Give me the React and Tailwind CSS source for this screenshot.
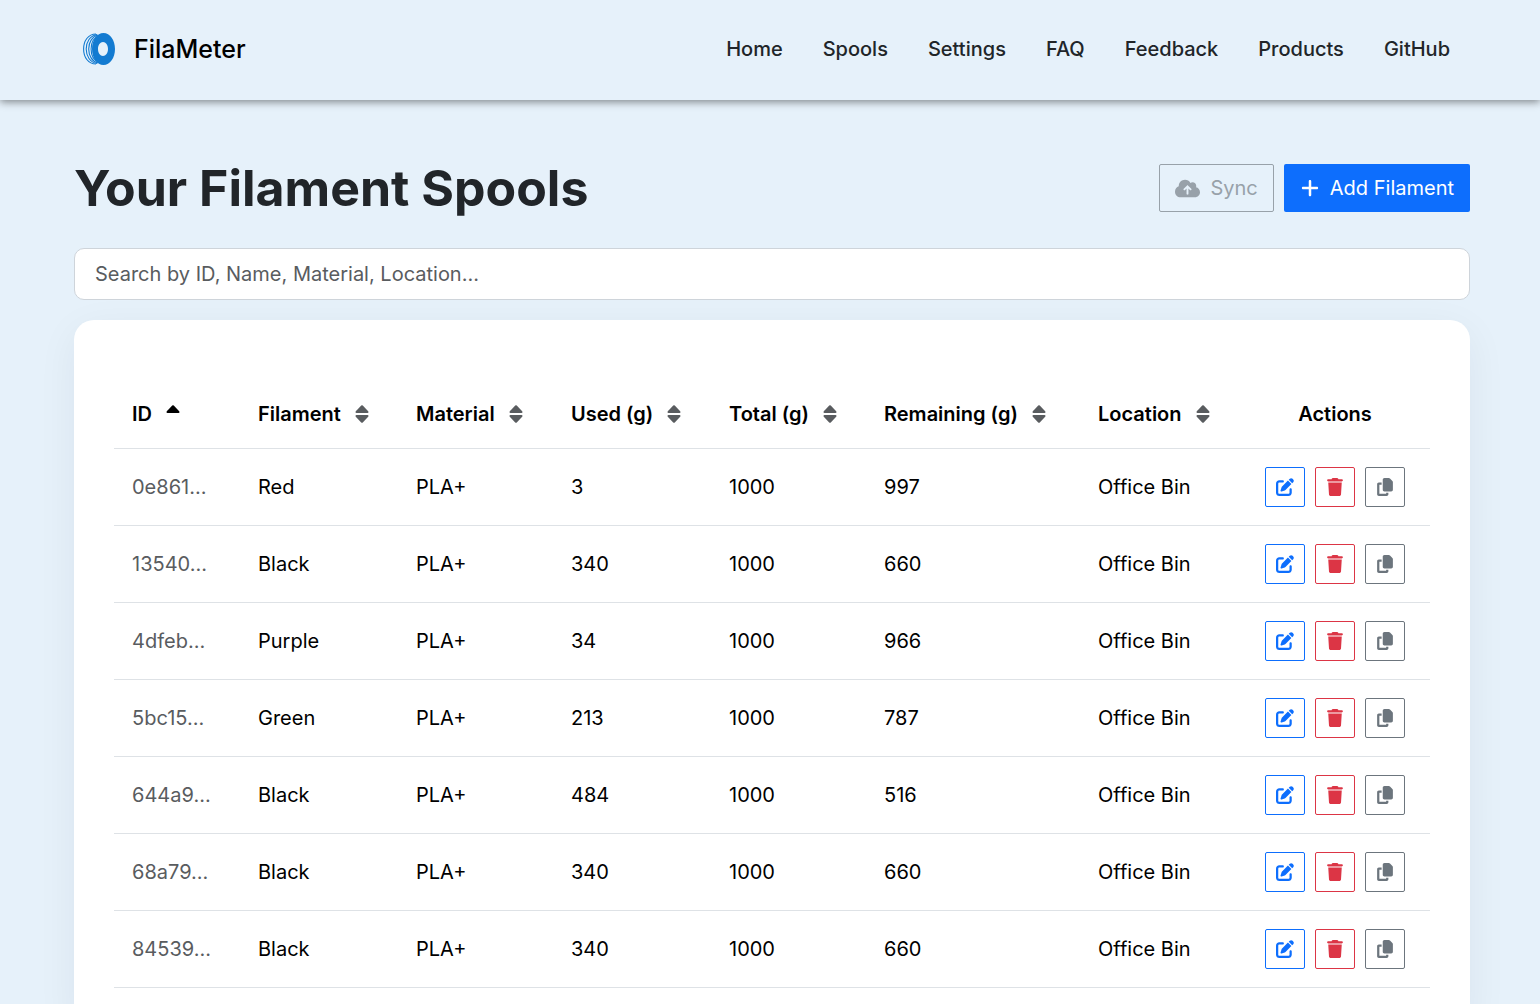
import { FaCloudArrowUp, FaCopy, FaPenToSquare, FaPlus, FaTrash } from 'react-icons/fa6'

const NAV_LINKS = ['Home', 'Spools', 'Settings', 'FAQ', 'Feedback', 'Products', 'GitHub']

const COLUMNS = [
  { label: 'ID', width: 'w-[126px]', sorted: true },
  { label: 'Filament', width: 'w-[158px]' },
  { label: 'Material', width: 'w-[155px]' },
  { label: 'Used (g)', width: 'w-[158px]' },
  { label: 'Total (g)', width: 'w-[155px]' },
  { label: 'Remaining (g)', width: 'w-[214px]' },
  { label: 'Location', width: 'w-[160px]' },
]

const SPOOLS = [
  { id: '0e861', filament: 'Red', used: 3 },
  { id: '13540', filament: 'Black', used: 340 },
  { id: '4dfeb', filament: 'Purple', used: 34 },
  { id: '5bc15', filament: 'Green', used: 213 },
  { id: '644a9', filament: 'Black', used: 484 },
  { id: '68a79', filament: 'Black', used: 340 },
  { id: '84539', filament: 'Black', used: 340 },
]

const TOTAL = 1000

function Logo() {
  return (
    <svg viewBox="0 0 34 34" className="size-[34px]" aria-hidden="true">
      <g fill="none" stroke="#137bd1" strokeWidth="1.1">
        <path d="M14 2C6 2 1.600 9 1.600 17S6 32 14 32" />
        <path d="M15 2.600C8 3.500 4.200 10 4.200 17S8 30.500 15 31.400" />
        <path d="M16 3C10 4.500 6.700 10.500 6.700 17S10 29.500 16 31" />
        <path d="M17 3.500C12 5.500 9.100 11 9.100 17S12 28.500 17 30.500" />
      </g>
      <path
        fill="#137bd1"
        fillRule="evenodd"
        d="M21.500 1C28 1 33 8.200 33 17S28 33 21.500 33 10 25.800 10 17 15 1 21.500 1ZM21 10C18.200 10 16 13.100 16 17S18.200 24 21 24 26 20.900 26 17 23.800 10 21 10Z"
      />
    </svg>
  )
}

// both arrows when the column is unsorted, only the top one when ascending
function SortIcon({ sorted }) {
  return (
    <svg
      viewBox="0 0 14 18"
      className={sorted ? 'h-[18px] w-[14px] text-black' : 'h-[18px] w-[14px] text-[#595c5f]'}
      fill="currentColor"
      aria-hidden="true"
    >
      <path d="M6.200.6Q7-.1 7.800.6L13.200 6.200Q14 8 12.500 8H1.500Q0 8 .8 6.200Z" />
      {!sorted && <path d="M6.200 17.400Q7 18.100 7.800 17.400L13.200 11.800Q14 10 12.500 10H1.500Q0 10 .8 11.800Z" />}
    </svg>
  )
}

function Header() {
  return (
    <header className="relative flex h-[100px] items-center justify-between bg-[#e6f1fa] pr-[90px] pb-[2px] pl-[82px] shadow-[0_2px_8px_rgba(0,0,0,0.45)]">
      <a href="#" className="flex items-center gap-[18px] text-[25px] font-medium text-black">
        <Logo />
        FilaMeter
      </a>
      <nav className="flex gap-10">
        {NAV_LINKS.map((link) => (
          <a key={link} href="#" className="text-xl font-medium text-[#212529]">
            {link}
          </a>
        ))}
      </nav>
    </header>
  )
}

function SpoolRow({ spool }) {
  const btn = 'flex size-10 items-center justify-center rounded-[2px] border'

  return (
    <tr className="h-[77px] border-b border-[#dee2e6]">
      <td className="pl-[18px] text-[#595c5f]">{spool.id}...</td>
      <td className="pl-[18px]">{spool.filament}</td>
      <td className="pl-[18px]">PLA+</td>
      <td className="pl-[18px]">{spool.used}</td>
      <td className="pl-[18px]">{TOTAL}</td>
      <td className="pl-[18px]">{TOTAL - spool.used}</td>
      <td className="pl-[18px]">Office Bin</td>
      <td>
        <div className="flex justify-center gap-[10px]">
          <button type="button" aria-label="Edit" className={`${btn} border-[#0d6efd] text-[#0d6efd]`}>
            <FaPenToSquare className="size-[18px]" />
          </button>
          <button type="button" aria-label="Delete" className={`${btn} border-[#dc3545] text-[#dc3545]`}>
            <FaTrash className="size-[18px]" />
          </button>
          <button type="button" aria-label="Duplicate" className={`${btn} border-[#6c757d] text-[#6c757d]`}>
            <FaCopy className="size-[18px]" />
          </button>
        </div>
      </td>
    </tr>
  )
}

export default function App() {
  return (
    <div className="min-h-screen bg-[#e6f1fa] font-['Inter',sans-serif] text-xl text-black">
      <Header />
      <main className="pt-[58px] pr-[70px] pb-10 pl-[74px]">
        <div className="flex items-center justify-between">
          <h1 className="text-[50px] leading-[60px] font-bold text-[#212529]">Your Filament Spools</h1>
          <div className="flex gap-[10px]">
            <button
              type="button"
              disabled
              className="flex h-12 items-center gap-[10px] rounded-[2px] border border-[#98a1a9] px-[15px] text-[#98a1a9]"
            >
              <FaCloudArrowUp className="size-[25px]" />
              Sync
            </button>
            <button
              type="button"
              className="flex h-12 items-center gap-[10px] rounded-[2px] bg-[#0d6efd] px-4 text-white"
            >
              <FaPlus className="size-5" />
              Add Filament
            </button>
          </div>
        </div>

        <input
          type="search"
          aria-label="Search spools"
          placeholder="Search by ID, Name, Material, Location..."
          className="mt-[30px] block h-[52px] w-full rounded-[10px] border border-[#ced4da] bg-white px-5 placeholder:text-[#595c5f]"
        />

        <div className="mt-5 rounded-[20px] bg-white px-10 pt-[60px] pb-10 shadow-[0_10px_40px_rgba(0,30,50,0.06)]">
          <table className="w-full table-fixed border-collapse text-left">
            <thead>
              <tr className="h-[68px] border-b border-[#dee2e6]">
                {COLUMNS.map((col) => (
                  <th key={col.label} scope="col" className={`${col.width} pl-[18px] font-semibold`}>
                    <button type="button" className="flex items-center gap-[14px] whitespace-nowrap">
                      {col.label}
                      <SortIcon sorted={col.sorted} />
                    </button>
                  </th>
                ))}
                <th scope="col" className="w-[190px] text-center font-semibold">
                  Actions
                </th>
              </tr>
            </thead>
            <tbody>
              {SPOOLS.map((spool) => (
                <SpoolRow key={spool.id} spool={spool} />
              ))}
            </tbody>
          </table>
        </div>
      </main>
    </div>
  )
}
